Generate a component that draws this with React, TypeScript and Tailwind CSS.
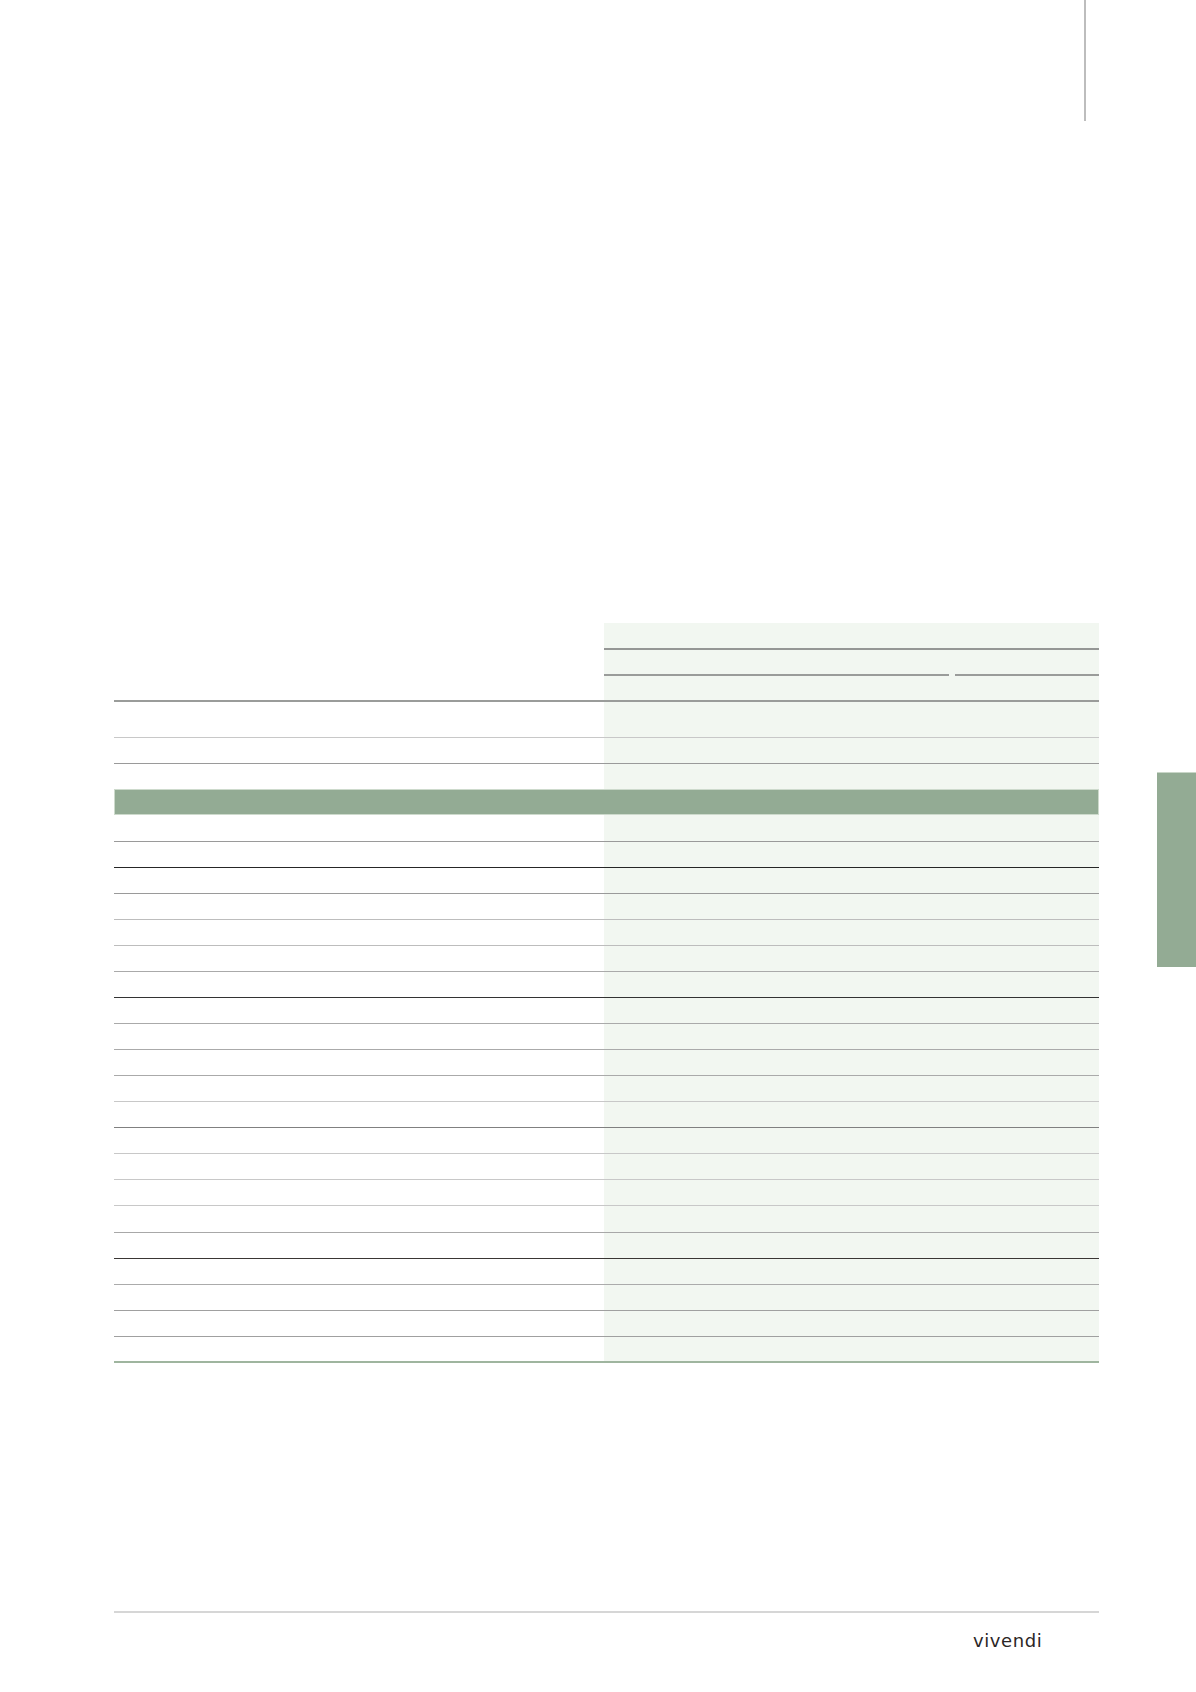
import React from 'react';

type BodyRow = { h: string; line: string };

// rows under the green band, each one closed by its rule
const bodyRows: BodyRow[] = [
  { h: 'h-[27px]', line: 'border-b border-[#9a9a9a]' },
  { h: 'h-[26px]', line: 'border-b border-[#262626]' },
  { h: 'h-[26px]', line: 'border-b border-[#9a9a9a]' },
  { h: 'h-[26px]', line: 'border-b border-[#bdbdbd]' },
  { h: 'h-[26px]', line: 'border-b border-[#bdbdbd]' },
  { h: 'h-[26px]', line: 'border-b border-[#aaaaaa]' },
  { h: 'h-[26px]', line: 'border-b border-[#333333]' },
  { h: 'h-[26px]', line: 'border-b border-[#aaaaaa]' },
  { h: 'h-[26px]', line: 'border-b border-[#aaaaaa]' },
  { h: 'h-[26px]', line: 'border-b border-[#aaaaaa]' },
  { h: 'h-[26px]', line: 'border-b border-[#c8c8c8]' },
  { h: 'h-[26px]', line: 'border-b border-[#808080]' },
  { h: 'h-[26px]', line: 'border-b border-[#c8c8c8]' },
  { h: 'h-[26px]', line: 'border-b border-[#c8c8c8]' },
  { h: 'h-[26px]', line: 'border-b border-[#c8c8c8]' },
  { h: 'h-[27px]', line: 'border-b border-[#a8a8a8]' },
  { h: 'h-[26px]', line: 'border-b border-[#3a3634]' },
  { h: 'h-[26px]', line: 'border-b border-[#ababab]' },
  { h: 'h-[26px]', line: 'border-b border-[#a0a0a0]' },
  { h: 'h-[26px]', line: 'border-b border-[#a0a0a0]' },
  { h: 'h-[26px]', line: 'border-b-2 border-[#9fb59f]' },
];

const Row = ({ h, line }: BodyRow) => (
  <div className={`flex ${h} ${line}`}>
    <div className="w-[490px]" />
    <div className="flex-1 bg-[#f2f7f1]" />
  </div>
);

const App = () => {
  return (
    <div className="w-[1196px] h-[1692px] bg-white flex flex-col font-['Liberation_Sans',Arial,sans-serif]">
      {/* page edge marker */}
      <div className="ml-[1084px] w-[2px] h-[121px] bg-[#bdbdbd] shrink-0" />

      <div className="flex items-start mt-[502px]">
        {/* Table */}
        <div className="ml-[114px] w-[985px] flex flex-col">
          <div className="flex h-[27px]">
            <div className="w-[490px]" />
            <div className="flex-1 bg-[#f2f7f1] border-b-2 border-[#959795]" />
          </div>
          <div className="flex h-[26px]">
            <div className="w-[490px]" />
            <div className="w-[345px] bg-[#f2f7f1] border-b-2 border-[#9a9c9a]" />
            <div className="w-[6px] bg-[#f2f7f1]" />
            <div className="flex-1 bg-[#f2f7f1] border-b-2 border-[#9a9c9a]" />
          </div>
          <div className="flex h-[26px] border-b-2 border-[#9a9c9a]">
            <div className="w-[490px]" />
            <div className="flex-1 bg-[#f2f7f1]" />
          </div>

          <Row h="h-[36px]" line="border-b border-[#c8c8c8]" />
          <Row h="h-[26px]" line="border-b border-[#9a9a9a]" />
          <Row h="h-[25px]" line="" />

          {/* section band */}
          <div className="h-[26px] bg-[#93ab94] border border-[#cddacc]" />

          {bodyRows.map((r, i) => (
            <Row key={i} h={r.h} line={r.line} />
          ))}
        </div>

        {/* side tab */}
        <div className="ml-[58px] mt-[149px] w-[39px] h-[195px] bg-[#93ab94] border-t border-[#c9d6c8]" />
      </div>

      {/* Footer */}
      <footer className="mt-auto">
        <div className="ml-[114px] w-[985px] h-[2px] bg-[#d6d6d6]" />
        <div className="mt-[19px] pb-[42px] ml-[973px] text-[18px] leading-none tracking-[0.6px] text-[#2b2626] font-['DejaVu_Sans',sans-serif]">
          vivendi
        </div>
      </footer>
    </div>
  );
};

export default App;
